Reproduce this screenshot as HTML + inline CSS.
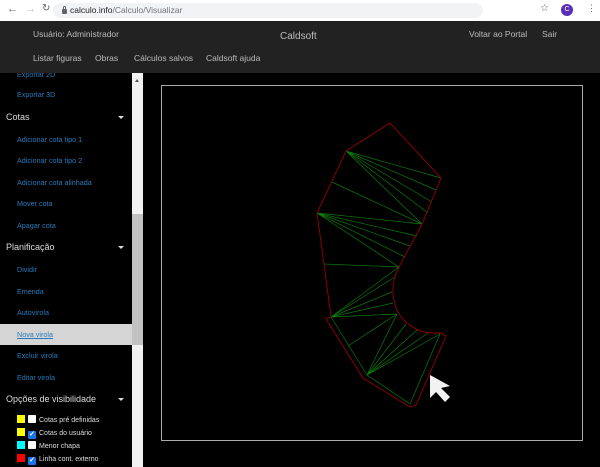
<!DOCTYPE html>
<html><head><meta charset="utf-8"><style>
*{margin:0;padding:0;box-sizing:border-box}
body{width:600px;height:467px;overflow:hidden;background:#000;font-family:"Liberation Sans",sans-serif;position:relative}
.chrome{position:absolute;left:0;top:0;width:600px;height:21px;background:#fff}
.url{position:absolute;left:53px;top:3px;width:430px;height:15px;border-radius:8px;background:#f1f3f4;font-size:8.5px;color:#202124;line-height:15px;padding-left:17px}
.url span{color:#70757a}
.nav{position:absolute;left:0;top:21px;width:600px;height:52px;background:#222;color:#bbb;font-size:8.5px}
.nav div{position:absolute}
.side{position:absolute;left:0;top:73px;width:132px;height:394px;background:#000;overflow:hidden}
.side .l{position:absolute;left:17px;font-size:7.2px;color:#2a7ab9}
.side .h{position:absolute;left:6px;font-size:9px;color:#ddd}
.side .h:after{content:"";position:absolute;left:112px;top:4px;border:3px solid transparent;border-top:3px solid #ddd}
.sb{position:absolute;left:132px;top:73px;width:11px;height:394px;background:#f1f1f1}
.cb{position:absolute;font-size:7px;color:#ddd;left:17px}
.cb i{display:inline-block;width:8px;height:8px;vertical-align:-1px;margin-right:3px}
.cb b{display:inline-block;width:8px;height:8px;vertical-align:-1px;margin-right:3px;background:#fff;border-radius:1px;font-size:7px;color:#fff;line-height:8px;text-align:center}
.cb b.c{background:#1a73e8}
</style></head><body>
<div class="chrome">
<div style="position:absolute;left:7px;top:3px;font-size:11px;color:#5f6368">&#8592;</div>
<div style="position:absolute;left:25px;top:3px;font-size:11px;color:#bbb">&#8594;</div>
<div style="position:absolute;left:42px;top:3px;font-size:10px;color:#5f6368">&#8635;</div>
<div class="url"><i style="position:absolute;left:9px;top:6px;width:5px;height:5px;background:#5f6368;border-radius:1px"></i><i style="position:absolute;left:10px;top:3px;width:3px;height:4px;border:1px solid #5f6368;border-bottom:none;border-radius:2px 2px 0 0"></i>calculo.info<span>/Calculo/Visualizar</span></div>
<div style="position:absolute;left:540px;top:3px;font-size:10px;color:#5f6368">&#9734;</div>
<div style="position:absolute;left:561px;top:4px;width:12px;height:12px;border-radius:6px;background:#5a2fb8;color:#fff;font-size:7px;text-align:center;line-height:12px">C</div>
<div style="position:absolute;left:587px;top:3px;font-size:9px;color:#5f6368">&#8942;</div>
</div>
<div class="nav">
<div style="left:33px;top:8px">Usuário: Administrador</div>
<div style="left:280px;top:10px;font-size:10px">Caldsoft</div>
<div style="left:469px;top:8px">Voltar ao Portal</div>
<div style="left:542px;top:8px">Sair</div>
<div style="left:33px;top:32px">Listar figuras</div>
<div style="left:95px;top:32px">Obras</div>
<div style="left:134px;top:32px">Cálculos salvos</div>
<div style="left:206px;top:32px">Caldsoft ajuda</div>
</div>
<div class="side">
<div class="l" style="top:-3px">Exportar 2D</div>
<div class="l" style="top:17px">Exportar 3D</div>
<div class="h" style="top:39px">Cotas</div>
<div class="l" style="top:62px">Adicionar cota tipo 1</div>
<div class="l" style="top:83px">Adicionar cota tipo 2</div>
<div class="l" style="top:105px">Adicionar cota alinhada</div>
<div class="l" style="top:126px">Mover cota</div>
<div class="l" style="top:148px">Apagar cota</div>
<div class="h" style="top:169px">Planificação</div>
<div class="l" style="top:192px">Dividir</div>
<div class="l" style="top:214px">Emenda</div>
<div class="l" style="top:235px">Autovirola</div>
<div style="position:absolute;left:0;top:251px;width:132px;height:21px;background:#d5d5d5"></div>
<div class="l" style="top:257px;text-decoration:underline">Nova virola</div>
<div class="l" style="top:278px">Excluir virola</div>
<div class="l" style="top:300px">Editar virola</div>
<div class="h" style="top:321px">Opções de visibilidade</div>
<div class="cb" style="top:342px"><i style="background:#ff0"></i><b></b>Cotas pré definidas</div>
<div class="cb" style="top:355px"><i style="background:#ff0"></i><b class="c">✓</b>Cotas do usuário</div>
<div class="cb" style="top:368px"><i style="background:#0ff"></i><b></b>Menor chapa</div>
<div class="cb" style="top:381px"><i style="background:#f00"></i><b class="c">✓</b>Linha cont. externo</div>
</div>
<div class="sb"><div style="position:absolute;left:0;top:141px;width:11px;height:131px;background:#c1c1c1"></div>
<div style="position:absolute;left:3px;top:4px;border:2.5px solid transparent;border-bottom:3px solid #555"></div></div>
<svg style="position:absolute;left:0;top:0" width="600" height="467">
<rect x="161.5" y="85.5" width="421" height="355" fill="none" stroke="#aaa" stroke-width="1"/>
<g stroke="#0b7a0b" stroke-width="0.7" fill="none">
<path d="M346 151L441 178M346 151L436 190M346 151L432 202M346 151L428 213M346 151L422 224M332 182L422 224"/>
<path d="M317 213L422 224M317 213L417 236M317 213L410 246M317 213L405 257M317 213L399 267M324 264L399 267"/>
<path d="M331 317L399 267M331 317L395 277M331 317L392 292M331 317L393 303M331 317L397 314M331 317L367 375M348 346L397 314"/>
<path d="M367 375L397 314M367 375L406 324M367 375L417 330M367 375L428 333M367 375L440 334M440 334L410 404M367 375L410 404"/>
</g>
<path d="M346 151L390 123L441 178L422 224L399 267Q392 280 393 293Q394 312 407 323Q418 332 430 333L440 333L446 336L416 405L410 407L363 378L326 319L331 317L324 264L317 213Z" fill="none" stroke="#950000" stroke-width="0.9"/>
<path d="M430 375L430 398L436 392L445 402L450 397L441 388L450 386Z" fill="#f2f2f2"/>
</svg>
</body></html>
